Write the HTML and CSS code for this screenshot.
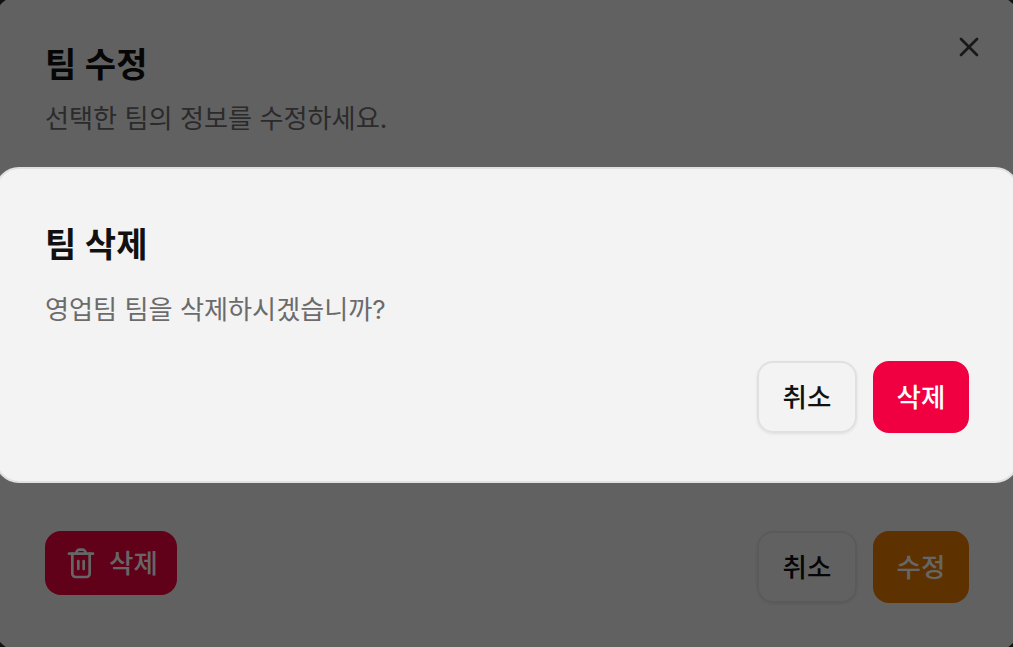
FILE: index.html
```html
<!DOCTYPE html>
<html lang="ko">
<head>
<meta charset="utf-8">
<title>팀 삭제</title>
<link rel="stylesheet" href="styles.css">
</head>
<body>
<div class="screen">
  <section class="modal">
    <header class="modal-head">
      <h2 class="title">팀 수정</h2>
      <p class="desc">선택한 팀의 정보를 수정하세요.</p>
      <button class="close" aria-label="닫기">
        <svg viewBox="0 0 24 24" width="32" height="32" fill="none" stroke="currentColor" stroke-width="2" stroke-linecap="round" stroke-linejoin="round"><path d="M18 6 6 18"/><path d="m6 6 12 12"/></svg>
      </button>
    </header>
    <footer class="modal-foot">
      <button class="btn btn-danger btn-icon">
        <svg viewBox="0 0 24 24" width="32" height="32" fill="none" stroke="currentColor" stroke-width="2" stroke-linecap="round" stroke-linejoin="round"><path d="M3 5h18"/><path d="M5.5 5v15a2.5 2.5 0 0 0 2.5 2.5h8a2.5 2.5 0 0 0 2.5-2.5V5"/><path d="M8.5 5v-.5A2.5 2.5 0 0 1 11 2h2a2.5 2.5 0 0 1 2.5 2.5V5"/><path d="M10 10.5v6"/><path d="M14 10.5v6"/></svg>
        <span class="btn-label">삭제</span>
      </button>
      <div class="actions">
        <button class="btn btn-outline"><span class="btn-label">취소</span></button>
        <button class="btn btn-primary"><span class="btn-label">수정</span></button>
      </div>
    </footer>
  </section>
  <div class="scrim"></div>
  <section class="alert">
    <h2 class="title">팀 삭제</h2>
    <p class="desc alert-desc">영업팀 팀을 삭제하시겠습니까?</p>
    <div class="actions alert-actions">
      <button class="btn btn-outline"><span class="btn-label">취소</span></button>
      <button class="btn btn-danger"><span class="btn-label">삭제</span></button>
    </div>
  </section>
</div>
</body>
</html>
```
FILE: styles.css
```css
* { box-sizing: border-box; }
html, body { margin: 0; height: 100%; }
body {
  background: #000;
  font-family: Inter, "Noto Sans CJK KR", "Noto Sans", sans-serif;
  overflow: hidden;
}
.screen { position: relative; width: 1013px; height: 647px; overflow: hidden; background: #2b2b2b; }
.modal {
  position: absolute;
  left: -5.5px; right: -5.5px; top: -4px; bottom: -4px;
  background: #f3f3f3;
  border-radius: 24px;
  padding: 42.5px 49.5px 48px 50.5px;
  display: flex;
  flex-direction: column;
  justify-content: space-between;
}
.title { margin: 0; font-size: 34px; line-height: 51px; font-weight: 600; color: #111; }
.desc { margin: 9px 0 0; font-size: 26.15px; line-height: 39px; font-weight: 400; color: #6b6b6b; }
.close {
  position: absolute; top: 35px; right: 34px;
  width: 32px; height: 32px; padding: 0;
  background: none; border: 0; color: #3f3f46;
}
.close svg { display: block; }
.modal-foot { display: flex; justify-content: space-between; align-items: flex-start; }
.actions { display: flex; gap: 16px; }
.btn {
  font: inherit; font-size: 26.5px; font-weight: 500;
  height: 72px; width: 96px; border-radius: 16px; border: 0; padding: 0;
  display: inline-flex; align-items: center; justify-content: center;
}
.btn-label { line-height: 32px; }
.btn-outline {
  width: 100px;
  background: transparent; color: #111; border: 2px solid #e0e0e0;
  box-shadow: 0 1px 3px rgba(0,0,0,.08);
}
.btn-primary { background: #ec7a00; color: #fff; }
.btn-danger { background: #f00040; color: #fff; }
.btn-icon { height: 64px; width: 132px; gap: 12px; justify-content: flex-start; padding: 0 0 0 20px; }
.scrim { position: absolute; inset: 0; background: rgba(0,0,0,.6); }
.alert {
  position: absolute; left: -5.5px; right: -5.5px; top: 167px; height: 316px;
  background: #f3f3f3;
  border: 2px solid #e0e0e0;
  border-radius: 24px;
  padding: 49.5px 47.5px 0 48.5px;
  display: flex; flex-direction: column;
}
.alert-desc { margin-top: 20px; }
.alert-actions { justify-content: flex-end; margin-top: 32.5px; }
```
